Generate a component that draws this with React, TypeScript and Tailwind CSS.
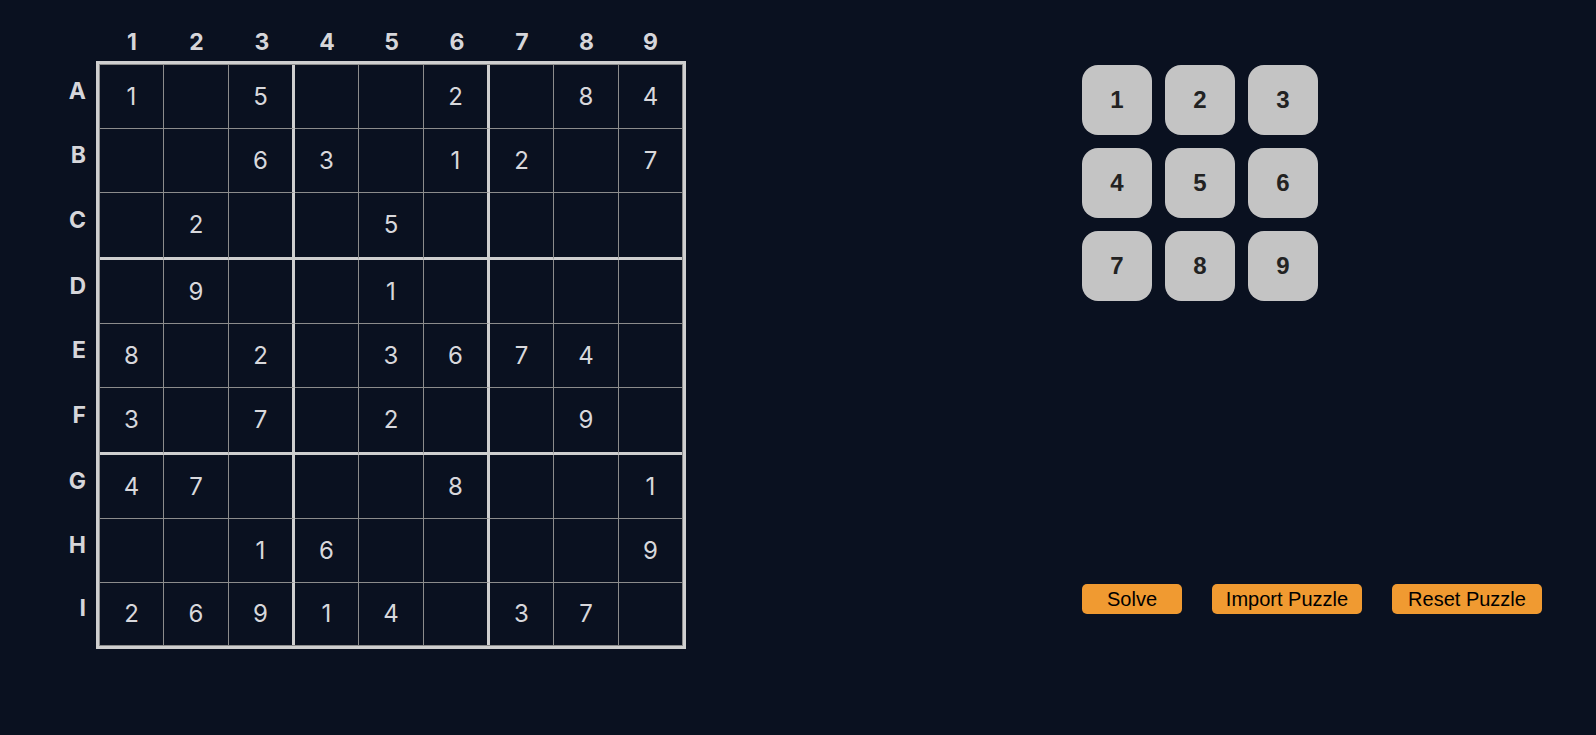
import { useState } from "react";

const rows = ["A", "B", "C", "D", "E", "F", "G", "H", "I"];

const puzzle = [
  "1.5..2.84",
  "..63.12.7",
  ".2..5....",
  ".9..1....",
  "8.2.3674.",
  "3.7.2..9.",
  "47...8..1",
  "..16....9",
  "26914.37.",
];

function cellClass(r: number, c: number) {
  const right =
    c === 2 || c === 5 ? "border-r-[3px] border-r-[#cfcfcf]" : c === 8 ? "" : "border-r border-r-[#8c8c8c]";
  const bottom =
    r === 2 || r === 5 ? "border-b-[3px] border-b-[#cfcfcf]" : r === 8 ? "" : "border-b border-b-[#8c8c8c]";
  return `flex items-center justify-center ${right} ${bottom}`;
}

export default function App() {
  const [selected, setSelected] = useState<number | null>(null);

  return (
    <div className="flex min-h-screen bg-[#0a1120] pl-[46px] pt-[27px] font-['Inter',sans-serif]">
      <section>
        <div className="ml-[54px] grid h-[31px] grid-cols-[64px_65px_66px_64px_65px_66px_64px_65px_63px] items-center text-[23px] font-bold text-[#d6d6da]">
          {Array.from({ length: 9 }, (_, i) => (
            <span key={i} className="text-center leading-none">
              {i + 1}
            </span>
          ))}
        </div>

        <div className="mt-[3px] flex">
          <div className="mr-[10px] grid w-[40px] grid-rows-[64px_64px_67px_64px_64px_67px_64px_64px_62px] pt-[4px] text-[23px] font-bold text-[#d6d6da]">
            {rows.map((label) => (
              <div key={label} className="flex items-center justify-end pb-3 leading-none">
                {label}
              </div>
            ))}
          </div>

          <div className="border-[3px] border-[#cfcfcf]">
            <div className="grid grid-cols-[64px_65px_66px_64px_65px_66px_64px_65px_63px] grid-rows-[64px_64px_67px_64px_64px_67px_64px_64px_62px] border border-[#8c8c8c] text-[24px] text-[#d8d8dc]">
              {puzzle.map((line, r) =>
                line.split("").map((ch, c) => (
                  <div
                    key={`${r}-${c}`}
                    className={cellClass(r, c)}
                    onClick={() => setSelected(r * 9 + c)}
                  >
                    {ch === "." ? "" : ch}
                  </div>
                ))
              )}
            </div>
          </div>
        </div>
      </section>

      <aside className="ml-[396px] flex flex-col pt-[38px] font-['Liberation_Sans',Arial,sans-serif]">
        <div className="grid grid-cols-[repeat(3,70px)] gap-[13px]">
          {Array.from({ length: 9 }, (_, i) => (
            <button
              key={i}
              className="flex h-[70px] w-[70px] items-center justify-center rounded-2xl bg-[#c4c4c4] text-[24px] font-bold text-[#222222]"
              onClick={() => setSelected(selected)}
            >
              {i + 1}
            </button>
          ))}
        </div>

        <div className="mt-[283px] flex gap-[30px] text-[20px] text-black">
          <button className="h-[30px] w-[100px] rounded-[5px] bg-[#f09a31] leading-none">Solve</button>
          <button className="h-[30px] w-[150px] rounded-[5px] bg-[#f09a31] leading-none">Import Puzzle</button>
          <button className="h-[30px] w-[150px] rounded-[5px] bg-[#f09a31] leading-none">Reset Puzzle</button>
        </div>
      </aside>
    </div>
  );
}
